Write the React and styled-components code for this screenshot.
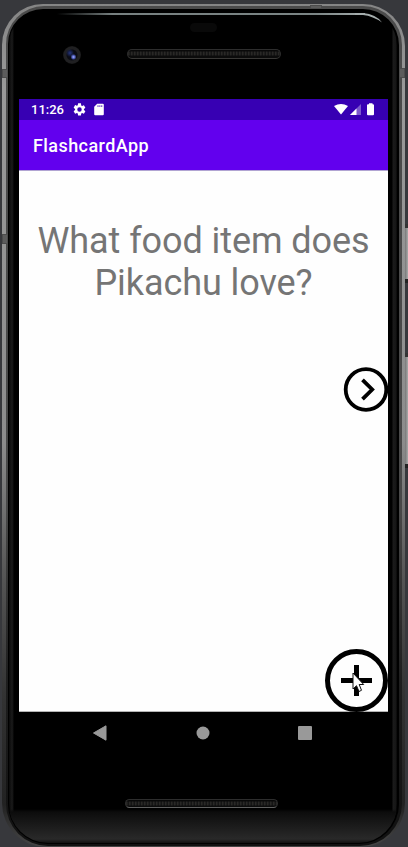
import React from "react";
import styled, { createGlobalStyle } from "styled-components";

const GlobalStyle = createGlobalStyle`
  * { box-sizing: border-box; }
  html, body { margin: 0; padding: 0; background: #37383c; overflow: hidden; }
  body { font-family: Roboto, "Liberation Sans", sans-serif; }
  svg { display: block; flex: none; }
`;

const Desktop = styled.div`
  width: 408px;
  height: 847px;
  padding: 4px 3px 0 2px;
  background: #37383c;
  overflow: hidden;
  position: relative;
`;

const Rim = styled.div`
  position: relative;
  width: 403px;
  height: 843px;
  padding: 2px 3px 1px 4px;
  border-radius: 41px 42px 44px 44px;
  background: linear-gradient(#858585 0, #999 10%, #8c8c8c 52%, #555 68%, #333 82%, #222 95%, #454545 100%);
`;

const InnerRim = styled.div`
  height: 100%;
  padding: 3px 3px 2px 2px;
  border-radius: 38px 39px 42px 42px;
  background: linear-gradient(#4b4b4b 0, #484848 60%, #1e1e1e 80%, #111 100%);
`;

const Glass = styled.div`
  height: 100%;
  border-radius: 35px 36px 40px 40px;
  border: solid #000;
  border-width: 2px 2px 1px 1px;
  background: linear-gradient(90deg, #090909 0, #1a1a1a 3px, #111 4px, #000 5px, #000 calc(100% - 5px), #1b1b1b calc(100% - 4px), #161616 calc(100% - 1px), #050505 100%);
  overflow: hidden;
`;

const Face = styled.div`
  display: flex;
  flex-direction: column;
  height: 100%;
  padding: 0 8px 0 10px;
  background: linear-gradient(transparent 0, transparent 798px, #0c0c0c 801px, #191919 813px, #292929 828px, #111 832px);
`;

const TopBezel = styled.div`
  flex: none;
  height: 88px;
  position: relative;
`;

const Shine = styled.div`
  height: 2px;
  margin: 2px 24px 0 38px;
  background: linear-gradient(90deg, #000, #778080 18%, #7b8585 84%, #a5adad);
`;

const ShineCurve = styled.svg`
  position: absolute;
  right: 4px;
  top: 2px;
`;

const Sensor = styled.div`
  width: 27px;
  height: 9px;
  margin: 8px 0 0 171px;
  border-radius: 5px;
  background: #090909;
`;

const CameraRow = styled.div`
  display: flex;
  align-items: center;
  height: 18px;
  margin-top: 14px;
  padding-left: 44px;
`;

const Camera = styled.div`
  width: 18px;
  height: 18px;
  margin-right: 46px;
  border-radius: 50%;
  background:
    radial-gradient(circle at 10.5px 11px, #a9b3ff 0, #5261c2 1.5px, transparent 3px),
    radial-gradient(circle at 7px 7px, #26357c 0, #17204a 2px, transparent 4px),
    radial-gradient(circle, #0b0c14 0 5px, #202022 6px 8px, #171717 9px);
`;

const Speaker = styled.div`
  flex: none;
  width: ${(p) => p.$width}px;
  height: ${(p) => p.$height}px;
  margin-bottom: ${(p) => p.$lift || 0}px;
  border: 1px solid #2d2d2d;
  border-bottom-color: ${(p) => p.$edge};
  border-radius: 6px;
  background:
    linear-gradient(#090909 0 1px, transparent 2px 5px, #0b0b0b 6px),
    repeating-linear-gradient(90deg, #292826 0 1px, #151515 2px 3px);
`;

const Screen = styled.main`
  flex: none;
  width: 369px;
  height: 613px;
  display: flex;
  flex-direction: column;
  background: #fefefe;
  box-shadow: inset 0 -1px #b4b4b4;
`;

const StatusBar = styled.div`
  flex: none;
  height: 21px;
  display: flex;
  align-items: center;
  justify-content: space-between;
  padding: 0 13px 0 12px;
  color: #fff;
  background: #3700b3;
`;

const StatusGroup = styled.div`
  display: flex;
  align-items: center;
  gap: ${(p) => p.$gap}px;
`;

const Clock = styled.span`
  width: 34px;
  padding-top: 1px;
  font-size: 13px;
  line-height: 20px;
  font-weight: 500;
`;

const AppBar = styled.header`
  flex: none;
  height: 51px;
  padding: 0 14px;
  background: #6200ee;
  border-bottom: 1px solid #b1a4d2;
`;

const Title = styled.h1`
  margin: 0;
  color: #fff;
  font-size: 18px;
  line-height: 52px;
  font-weight: 500;
  letter-spacing: 0.42px;
`;

const Card = styled.section`
  flex: 1;
  display: flex;
  flex-direction: column;
  align-items: flex-end;
`;

const Question = styled.p`
  width: 369px;
  margin: 49px 0 0;
  color: #757575;
  font-size: 36px;
  letter-spacing: -0.08px;
  line-height: 42px;
  text-align: center;
  white-space: nowrap;
`;

const RoundButton = styled.button`
  display: block;
  flex: none;
  position: relative;
  padding: 0;
  border: 0;
  background: none;
  width: ${(p) => p.$size}px;
  height: ${(p) => p.$size}px;
  margin-top: ${(p) => p.$top}px;
`;

const Cursor = styled.svg`
  position: absolute;
  left: 27px;
  top: 23px;
`;

const NavBar = styled.nav`
  flex: none;
  display: flex;
  justify-content: space-between;
  align-items: center;
  height: 42px;
  padding: 0 76px 0 74px;
`;

const BottomBezel = styled.footer`
  padding: 45px 0 0 106px;
`;

const SideKey = styled.div`
  position: absolute;
  left: 405px;
  top: ${(p) => p.$top}px;
  width: 3px;
  height: ${(p) => p.$height}px;
  border-top: 4px solid #333;
  border-bottom: 4px solid #222;
  background: linear-gradient(90deg, #777, #aaa);
`;

const Antenna = styled.div`
  position: absolute;
  left: ${(p) => p.$left}px;
  top: ${(p) => p.$top}px;
  width: ${(p) => p.$width}px;
  height: ${(p) => p.$height}px;
  background: #5c5c5c;
  border: 1px solid #4c4c4c;
`;

function GearIcon() {
  return (
    <svg width="13" height="13" viewBox="1.5 1.5 21 21" fill="#fff">
      <path d="M19.14 12.94c.04-.3.06-.61.06-.94s-.02-.64-.07-.94l2.03-1.58a.49.49 0 0 0 .12-.61l-1.92-3.32a.49.49 0 0 0-.59-.22l-2.39.96a7 7 0 0 0-1.62-.94l-.36-2.54A.48.48 0 0 0 13.92 2h-3.84a.48.48 0 0 0-.47.41l-.36 2.54a7 7 0 0 0-1.62.94l-2.39-.96a.48.48 0 0 0-.59.22L2.74 8.87a.48.48 0 0 0 .12.61l2.03 1.58a6 6 0 0 0 0 1.88l-2.03 1.58a.49.49 0 0 0-.12.61l1.92 3.32c.12.22.37.29.59.22l2.39-.96c.5.38 1.03.7 1.62.94l.36 2.54c.05.24.24.41.48.41h3.84c.24 0 .44-.17.47-.41l.36-2.54a7 7 0 0 0 1.62-.94l2.39.96c.22.08.47 0 .59-.22l1.92-3.32a.48.48 0 0 0-.12-.61zM12 15.6A3.6 3.6 0 1 1 12 8.4a3.6 3.6 0 0 1 0 7.2z" />
    </svg>
  );
}

function SdCardIcon() {
  return (
    <svg width="10" height="13" viewBox="0 0 10 13" fill="#fff">
      <path
        fillRule="evenodd"
        d="M3.2 .8H8.8Q9.8 .8 9.8 1.8V11.2Q9.8 12.2 8.8 12.2H1.2Q.2 12.2 .2 11.2V3.8Z M3.6 2.3V4H4.4V2.3Z M5.5 2.3V4H6.3V2.3Z M7.4 2.3V4H8.2V2.3Z"
      />
    </svg>
  );
}

function SignalIcons() {
  return (
    <svg width="41" height="13" viewBox="0 0 41 13" fill="#fff">
      <path d="M0 3Q7 -1 14 3L7 11.5Z" />
      <path d="M27 1V12H16Z" opacity=".35" />
      <path d="M22.5 5.5V12H16Z" />
      <path d="M35 1.3V.3H38.5V1.3H39Q40 1.3 40 2.3V11.2Q40 12.2 39 12.2H34Q33 12.2 33 11.2V2.3Q33 1.3 34 1.3Z" />
    </svg>
  );
}

export default function App() {
  return (
    <>
      <GlobalStyle />
      <Desktop>
        <Rim>
          <InnerRim>
            <Glass>
              <Face>
                <TopBezel>
                  <Shine />
                  <ShineCurve width="30" height="12" viewBox="0 0 30 12">
                    <path d="M0 0H8Q21 1 27 9.5Q18 3 8 2H0Z" fill="#a5adad" />
                  </ShineCurve>
                  <Sensor />
                  <CameraRow>
                    <Camera />
                    <Speaker $width={154} $height={10} $edge="#393836" $lift={2} />
                  </CameraRow>
                </TopBezel>
                <Screen>
                  <StatusBar>
                    <StatusGroup $gap={8}>
                      <Clock>11:26</Clock>
                      <GearIcon />
                      <SdCardIcon />
                    </StatusGroup>
                    <SignalIcons />
                  </StatusBar>
                  <AppBar>
                    <Title>FlashcardApp</Title>
                  </AppBar>
                  <Card>
                    <Question>
                      What food item does
                      <br />
                      Pikachu love?
                    </Question>
                    <RoundButton $size={45} $top={63} aria-label="Next card">
                      <svg width="45" height="45" viewBox="0 0 45 45" fill="none" stroke="#000">
                        <circle cx="23" cy="22.5" r="20.3" strokeWidth="3.8" />
                        <path d="M19.5 12.8 29.2 22.5 19.5 32.2" strokeWidth="3.8" />
                      </svg>
                    </RoundButton>
                    <RoundButton $size={63} $top={237} aria-label="Add card">
                      <svg width="63" height="63" viewBox="0 0 63 63" fill="none" stroke="#000">
                        <circle cx="31.5" cy="31.5" r="29" strokeWidth="5" />
                        <path d="M31.5 16V47M16 31.5H47" strokeWidth="5" />
                      </svg>
                      <Cursor width="14" height="22" viewBox="0 0 14 22">
                        <path d="M1 1V17L4.5 13.7 7 19.5 9.5 18.3 7.2 12.5H11.7Z" fill="#fff" stroke="#111" />
                      </Cursor>
                    </RoundButton>
                  </Card>
                </Screen>
                <NavBar>
                  <svg width="14" height="16" viewBox="0 0 14 16">
                    <path d="M.5 8 13 .8V15.2Z" fill="#999" stroke="#999" strokeLinejoin="round" />
                  </svg>
                  <svg width="14" height="14" viewBox="0 0 14 14">
                    <circle cx="7" cy="7" r="6.5" fill="#999" />
                  </svg>
                  <svg width="15" height="14" viewBox="0 0 15 14">
                    <rect width="14" height="14" rx="1" fill="#999" />
                  </svg>
                </NavBar>
                <BottomBezel>
                  <Speaker $width={153} $height={9} $edge="#606060" />
                </BottomBezel>
              </Face>
            </Glass>
          </InnerRim>
        </Rim>
        <Antenna $left={2} $top={69} $width={6} $height={9} />
        <Antenna $left={2} $top={234} $width={6} $height={10} />
        <Antenna $left={399} $top={68} $width={6} $height={10} />
        <Antenna $left={310} $top={5} $width={12} $height={4} />
        <SideKey $top={224} $height={59} />
        <SideKey $top={353} $height={115} />
      </Desktop>
    </>
  );
}
